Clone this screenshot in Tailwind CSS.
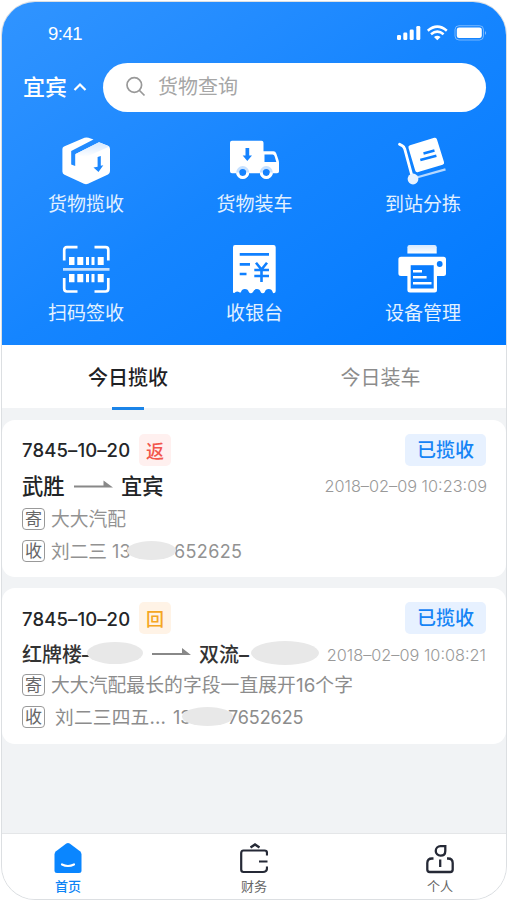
<!DOCTYPE html>
<html lang="zh-CN">
<head>
<meta charset="utf-8">
<title>首页</title>
<script src="https://cdn.jsdelivr.net/npm/@tailwindcss/browser@4"></script>
</head>
<body class="bg-white w-[507px] h-[900px] overflow-hidden font-['Inter','Noto_Sans_CJK_SC',sans-serif]">
<div class="w-[506px] h-[899px] mt-px ml-px rounded-[34px] border border-[#dcdfe2] bg-[#f1f3f5] overflow-hidden flex flex-col whitespace-nowrap">

  <header class="h-[343px] shrink-0 bg-linear-to-br from-[#3094ff] via-[#1585ff] to-[#0079ff] text-white flex flex-col">
    <div class="h-[60px] pl-[46px] pr-[19px] pt-[4px] flex items-center justify-between">
      <span class="text-[18.500px] leading-6 tracking-[-0.500px] font-['Liberation_Sans',sans-serif]">9:41</span>
      <svg class="w-[90px] h-[18px] -mt-[3px]" viewBox="0 0 90 18" fill="white">
        <rect x="0" y="11" width="4" height="5" rx="1.3"/><rect x="6.3" y="8.500" width="4" height="7.500" rx="1.3"/><rect x="12.700" y="5.500" width="4" height="10.500" rx="1.3"/><rect x="19.300" y="2" width="4" height="14" rx="1.3"/>
        <g fill="none" stroke="white" stroke-width="2.500"><path d="M30.800 6.700Q40.300-1.500 49.800 6.700"/><path d="M34 10.300Q40.300 5 46.600 10.300"/></g>
        <path d="M37 13Q40.300 10.300 43.600 13L40.300 16.300Z"/>
        <rect x="58" y="1.700" width="28.500" height="14.300" rx="4" fill="none" stroke="white" stroke-opacity=".4"/>
        <rect x="59.800" y="3.500" width="25" height="10.500" rx="2.300"/>
        <path d="M88 7v4q2-2 0-4" fill-opacity=".5"/>
      </svg>
    </div>
    <div class="h-[50px] pl-[21px] pr-[20px] flex items-center">
      <span class="text-[22px] leading-8 font-medium w-[46px]">宜宾</span>
      <svg class="w-[14px] h-[10px] ml-[4px]" viewBox="0 0 14 10" fill="none" stroke="white" stroke-width="2.200"><path d="M1.500 8L7 2.500L12.500 8"/></svg>
      <div class="ml-auto w-[383px] h-[49px] rounded-full bg-white flex items-center pl-[22px] text-[#a6a6a6]">
        <svg class="w-[21px] h-[21px] -mt-[2px]" viewBox="0 0 21 21" fill="none" stroke="#999" stroke-width="1.700"><circle cx="9.300" cy="9" r="7.300"/><path d="M14.500 14.500L19.500 19.500"/></svg>
        <span class="ml-[12px] text-[20px] leading-8">货物查询</span>
      </div>
    </div>

    <div class="grid grid-cols-3 pt-[24px] text-[19px] leading-6 text-[#e3f1ff]">
      <div class="h-[109px] flex flex-col items-center">
        <svg class="w-[48px] h-[49px] overflow-visible" viewBox="0 0 48 49">
          <defs><linearGradient id="fade" x1="0" y1="0" x2="0" y2="1"><stop offset="0" stop-color="#d4e8ff"/><stop offset="1" stop-color="white"/></linearGradient></defs>
          <path d="M2 10.500L22.500 1.800Q24.500 1 26.500 1.800L31.500 3.500L9.200 15V28.500L13.200 30V18.300L37 6.300L46 9.700Q48 10.500 48 13V35Q48 37.500 46 38.500L26 47.700Q24 48.600 22 47.700L2.500 38.700Q.4 37.700.4 35.500V13Q.4 11.200 2 10.500Z" fill="white"/>
          <path d="M13.500 18L37 6.300L47.500 10.500L24 21Z" fill="url(#fade)"/>
          <path d="M35.600 21L38.800 20V29.800L41.300 29.200L36.500 36L31.500 31.500L35.600 30.700Z" fill="#1c88ff"/>
        </svg>
        <span class="mt-[8px]">货物揽收</span>
      </div>
      <div class="h-[109px] flex flex-col items-center">
        <svg class="w-[48px] h-[49px] overflow-visible" viewBox="0 0 48 49">
          <path d="M2 4.700H31.500Q33.500 4.700 33.500 6.700V15.300H43.500Q45.500 15.300 46.300 17.500L48.500 24Q49 25.500 49 27V35.500Q49 37.300 47 37.300H2Q0 37.300 0 35.300V6.700Q0 4.700 2 4.700Z" fill="white"/>
          <path d="M34.500 18.500H42.700Q44 18.500 44.500 20L46.300 26H34.500Z" fill="#1583ff"/>
          <path d="M15.500 12H19.200V19.500H22L17.300 25L12.700 19.500H15.500Z" fill="#1583ff"/>
          <g fill="#1583ff" stroke="#c7e1ff" stroke-width="3"><circle cx="12.700" cy="36.500" r="5"/><circle cx="36.300" cy="36.500" r="5"/></g>
          <g fill="none" stroke="white" stroke-width="3"><path d="M7.700 36.500A5 5 0 0 0 17.700 36.500M31.300 36.500A5 5 0 0 0 41.300 36.500"/></g>
        </svg>
        <span class="mt-[8px] ml-px">货物装车</span>
      </div>
      <div class="h-[109px] flex flex-col items-center">
        <svg class="w-[48px] h-[49px] overflow-visible" viewBox="0 0 48 49">
          <path d="M15 42.500L47.500 33.300" stroke="#b5d8ff" stroke-width="2.300"/>
          <path d="M1.500 8.300L4.300 9.800Q6 10.700 6.700 13L14 40" fill="none" stroke="white" stroke-width="2.800" stroke-linecap="round"/>
          <path d="M12 9.200L36.300 1.800Q38.300 1.200 38.900 3.200L46 26Q46.600 28.200 44.600 28.800L20.200 36Q17.800 36.700 17.200 34.500L10.500 12Q9.900 9.900 12 9.200Z" fill="white"/>
          <circle cx="15" cy="43" r="5.400" fill="#e8f3ff"/>
          <path d="M25.500 17.500L36.500 14.500M22.300 24L38.400 19.700" stroke="#0d7fff" stroke-width="2.600"/>
        </svg>
        <span class="mt-[8px] ml-[2px]">到站分拣</span>
      </div>
      <div class="h-[100px] flex flex-col items-center">
        <svg class="w-[48px] h-[49px] overflow-visible" viewBox="0 0 48 49">
          <path d="M2.200 15.500V5Q2.200 2.200 5 2.200H15.500M32.500 2.200H43.500Q46.300 2.200 46.300 5V15.500M2.200 33V43.500Q2.200 46.500 5 46.500H15.500M32.500 46.500H43.500Q46.300 46.500 46.300 43.500V33" fill="none" stroke="white" stroke-width="2.700"/>
          <path d="M1 24.400H47.500" stroke="#c5e0ff" stroke-width="2.600"/>
          <path d="M7 12h5.500v8H7zM15.300 12h6v8h-6zM24 12h3v8h-3zM29.500 12h3v8h-3zM35.700 12h6v8h-6zM7 29h5.500v8.300H7zM15.300 29h6v8.300h-6zM24 29h3v8.300h-3zM29.500 29h3v8.300h-3zM35.700 29h6v8.300h-6z" fill="white"/>
        </svg>
        <span class="mt-[8px]">扫码签收</span>
      </div>
      <div class="h-[100px] flex flex-col items-center">
        <svg class="w-[48px] h-[49px] overflow-visible" viewBox="0 0 48 49">
          <path d="M5 0H43.500Q45.700 0 45.700 2.200V46Q45.700 48 43.700 48.200Q42.800 48 42.600 47A4 4 0 0 0 34.800 47Q34.200 48.200 32.700 48.200Q31.200 48.200 30.700 47A4 4 0 0 0 23 47Q22 48.200 20.800 48.200Q19.500 48.200 18.800 47A4 4 0 0 0 11 47Q10.300 48.200 9 47A4 4 0 0 0 5.500 47Q4.800 48.300 3.500 48Q3 47.700 3 46.500V2.200Q3 0 5 0Z" fill="white"/>
          <path d="M9.700 9.300H39M9.700 19.300H20M9.700 29H16.500" stroke="#1080ff" stroke-width="2.700"/>
          <path d="M26 17.700L31.500 24.500L37 17.700M31.500 24V37M24.300 25H39M24.300 31H39" fill="none" stroke="#1080ff" stroke-width="2.600"/>
        </svg>
        <span class="mt-[8px] ml-px">收银台</span>
      </div>
      <div class="h-[100px] flex flex-col items-center">
        <svg class="w-[48px] h-[49px] overflow-visible" viewBox="0 0 48 49">
          <path d="M11.500 0H36.500Q38.700 0 38.700 2.200V8.500H9.400V2.200Q9.400 0 11.500 0Z" fill="url(#fade)"/>
          <path d="M3 11.700H45.500Q48 11.700 48 14.200V28.500Q48 31 45.500 31H39V45Q39 47.500 36.500 47.500H12Q9.400 47.500 9.400 45V31H3Q.4 31 .4 28.500V14.200Q.4 11.700 3 11.700Z" fill="white"/>
          <path d="M12.700 20.200H35.700V43.500H12.700Z" fill="#087cff"/><circle cx="41.700" cy="19" r="2.900" fill="#087cff"/>
          <path d="M15 26.300H24M15 32.300H28.600M15 38.300H33.500" stroke="white" stroke-width="2.500"/>
        </svg>
        <span class="mt-[8px] ml-[2px]">设备管理</span>
      </div>
    </div>
  </header>

  <nav class="h-[63px] shrink-0 bg-white grid grid-cols-2 text-[20px] leading-8 text-[#8c8c8c]">
    <div class="relative pt-[2px] flex items-center justify-center font-medium text-[#1f2124]">今日揽收<span class="absolute -bottom-[2px] left-[110px] w-[32px] h-[3px] bg-[#1b84e8]"></span></div>
    <div class="pt-[2px] pl-px flex items-center justify-center">今日装车</div>
  </nav>

  <main class="flex-1 pt-[12px] flex flex-col gap-[11px]">
    <section class="h-[157px] rounded-[13px] bg-white px-[20px] pt-[14px]">
      <div class="h-[32px] flex items-center">
        <span class="pt-[2px] w-[117px] text-[18.500px] font-medium tracking-[0.120px] text-[#242628]">7845–10–20</span>
        <span class="pt-[2px] w-[32px] h-[32px] rounded-[5px] bg-[#fff0ef] text-[#f2564b] text-[18px] font-medium flex items-center justify-center">返</span>
        <span class="pt-[3px] ml-auto w-[81px] h-[32px] rounded-[5px] bg-[#e7f1ff] text-[#1684f5] text-[19px] font-medium flex items-center justify-center">已揽收</span>
      </div>
      <div class="h-[38px] flex items-center text-[21.300px] font-medium text-[#222426]">
        <span class="pt-[3px] w-[51px]">武胜</span>
        <svg class="w-[40px] h-[10px]" viewBox="0 0 40 10" fill="#888"><path d="M1 5.500H30.500V.5L40 7.500H1Z"/></svg>
        <span class="pt-[3px] ml-[8px]">宜宾</span>
        <span class="pt-[3px] ml-auto text-[16.300px] font-light text-[#999] -mr-px">2018–02–09 10:23:09</span>
      </div>
      <div class="h-[30px] flex items-center text-[18.800px] text-[#929292]">
        <span class="w-[23px] h-[22px] rounded-[4px] border border-[#999] text-[17px] leading-5 text-[#666] flex items-center justify-center">寄</span>
        <span class="pt-[3px] ml-[6px]">大大汽配</span>
      </div>
      <div class="h-[33px] flex items-center text-[18.700px] text-[#929292]">
        <span class="w-[23px] h-[22px] rounded-[4px] border border-[#999] text-[17px] leading-5 text-[#666] flex items-center justify-center">收</span>
        <span class="pt-[3px] ml-[6px]">刘二三</span>
        <span class="pt-[2px] ml-[5px] w-[19px] text-[18px]">13</span>
        <span class="-ml-[4px] mr-[-2px] w-[49px] h-[19px] rounded-[50%] bg-[#e8e8e8] z-10"></span>
        <span class="pt-[2px] text-[18px] tracking-[0.350px]">652625</span>
      </div>
    </section>

    <section class="h-[156px] rounded-[13px] bg-white px-[20px] pt-[14px]">
      <div class="h-[32px] flex items-center">
        <span class="pt-[3px] w-[117px] text-[18.500px] font-medium tracking-[0.120px] text-[#242628]">7845–10–20</span>
        <span class="pt-[2px] w-[32px] h-[32px] rounded-[5px] bg-[#fff3e6] text-[#f5a623] text-[18px] font-medium flex items-center justify-center">回</span>
        <span class="pt-[3px] ml-auto w-[81px] h-[32px] rounded-[5px] bg-[#e7f1ff] text-[#1684f5] text-[19px] font-medium flex items-center justify-center">已揽收</span>
      </div>
      <div class="h-[38px] flex items-center text-[20px] font-medium text-[#333]">
        <span class="pt-[4px] w-[65px]">红牌楼–</span>
        <span class="w-[56px] h-[22px] rounded-[50%] bg-[#e8e8e8] z-10"></span>
        <svg class="ml-[9px] w-[40px] h-[10px]" viewBox="0 0 40 10" fill="#888"><path d="M0 5H30V0L39 7H0Z"/></svg>
        <span class="pt-[4px] ml-[7px] w-[52px]">双流–</span>
        <span class="w-[68px] h-[24px] rounded-[50%] bg-[#e8e8e8] z-10"></span>
        <span class="pt-[4px] ml-auto text-[16.300px] font-light text-[#999]">2018–02–09 10:08:21</span>
      </div>
      <div class="h-[26px] flex items-center text-[18.800px] text-[#8c8c8c]">
        <span class="w-[23px] h-[22px] rounded-[4px] border border-[#999] text-[17px] leading-5 text-[#666] flex items-center justify-center">寄</span>
        <span class="pt-[2px] ml-[6px] tracking-[0.060px]">大大汽配最长的字段一直展开16个字</span>
      </div>
      <div class="h-[37px] flex items-center text-[18.700px] text-[#8c8c8c]">
        <span class="w-[23px] h-[22px] rounded-[4px] border border-[#999] text-[17px] leading-5 text-[#666] flex items-center justify-center">收</span>
        <span class="pt-[3px] ml-[10px] w-[118px] tracking-[0.200px]">刘二三四五...</span>
        <span class="pt-[2px] w-[19px] text-[18px]">13</span>
        <span class="-ml-[10px] -mr-[5px] w-[51px] h-[19px] rounded-[50%] bg-[#e8e8e8] z-10"></span>
        <span class="pt-[2px] text-[18px] tracking-[-0.100px]">7652625</span>
      </div>
    </section>
  </main>

  <footer class="h-[66px] shrink-0 bg-white border-t border-[#e4e6e8] flex justify-between text-[13px] leading-4 text-[#666]">
    <div class="w-[132px] pt-[8px] flex flex-col items-center text-[#0d84f5] font-medium">
      <svg class="w-[28px] h-[32px]" viewBox="0 0 28 32"><path d="M12.300 1.600Q14 .4 15.700 1.600L26 9.300Q27.500 10.500 27.500 12.500V28.500Q27.500 31 25 31H3Q.5 31 .5 28.500V12.500Q.5 10.500 2 9.300Z" fill="#0a86ff"/><path d="M8 22.500Q14 25.500 20 22.500" fill="none" stroke="white" stroke-width="2.200" stroke-linecap="round"/></svg>
      <span class="mt-[4px]">首页</span>
    </div>
    <div class="w-[132px] pt-[8px] flex flex-col items-center">
      <svg class="w-[28px] h-[32px]" viewBox="0 0 28 32" fill="none" stroke="#252936" stroke-width="2.200"><path d="M27 13.500V11Q27 8.500 24.500 8.500H3.500Q1.200 8.500 1.200 11V27.500Q1.200 30 3.500 30H23Q27 30 27 26V24.500M19 19.500H27.500"/><path d="M10.500 5.500L15 2.500L19.500 5.500" stroke-width="2.400"/></svg>
      <span class="mt-[4px]">财务</span>
    </div>
    <div class="w-[132px] pt-[8px] flex flex-col items-center">
      <svg class="w-[28px] h-[32px]" viewBox="0 0 28 32" fill="none" stroke="#252936" stroke-width="2.300"><path d="M14.500 4.200H19.300V9Q19.300 13.700 14.500 13.700A4.700 4.700 0 0 1 14.500 4.200ZM7.500 16.500H6Q1.300 16.500 1.300 21V27.500Q1.300 30 3.800 30H24.200Q26.700 30 26.700 27.500V21Q26.700 16.500 22 16.500H21M14.200 17.500V25"/></svg>
      <span class="mt-[4px]">个人</span>
    </div>
  </footer>
</div>
</body>
</html>
